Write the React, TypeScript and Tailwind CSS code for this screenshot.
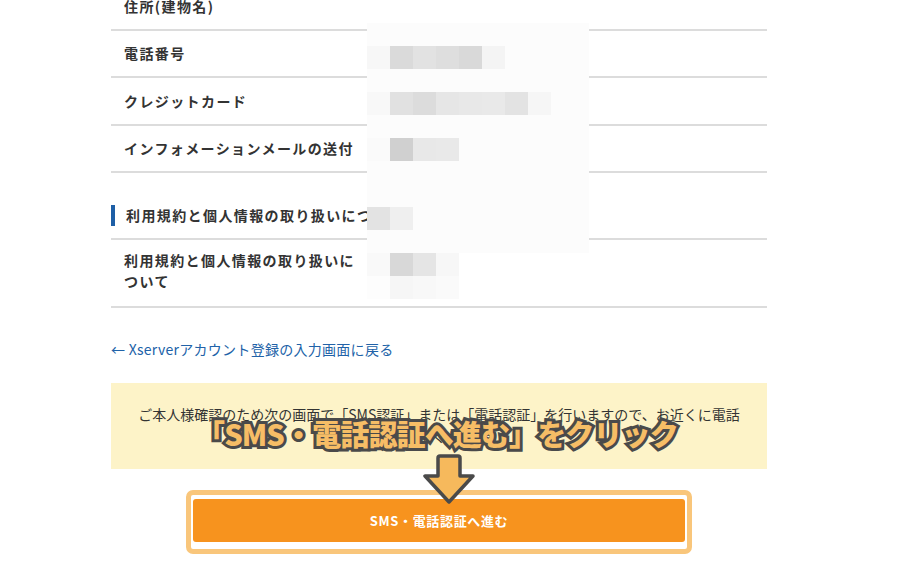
import { FC } from 'react';

const JP = 'font-["Noto_Sans_CJK_JP","Noto_Sans",sans-serif]';

const W = 'bg-[#fcfcfc]';
const T = 'bg-transparent';

// blurred values over the right column (mosaic)
const mosaic: string[][] = [
  [W, W, W, W, W, W, W, W, W, W],
  ['bg-[#f7f7f7]', 'bg-[#dadada]', 'bg-[#e2e2e2]', 'bg-[#dedede]', 'bg-[#d9d9d9]', 'bg-[#f4f4f4]', W, W, W, W],
  [W, W, W, W, W, W, W, W, W, W],
  ['bg-[#f8f8f8]', 'bg-[#e1e1e1]', 'bg-[#dcdcdc]', 'bg-[#e6e6e6]', 'bg-[#e8e8e8]', 'bg-[#e9e9e9]', 'bg-[#e3e3e3]', 'bg-[#f6f6f6]', W, W],
  [W, W, W, W, W, W, W, W, W, W],
  ['bg-[#fafafa]', 'bg-[#d0d0d0]', 'bg-[#e8e8e8]', 'bg-[#e9e9e9]', W, W, W, W, W, W],
  [W, W, W, W, W, W, W, W, W, W],
  [W, W, W, W, W, W, W, W, W, W],
  ['bg-[#e3e3e3]', 'bg-[#efefef]', W, W, W, W, W, W, W, W],
  [W, W, W, W, W, W, W, W, W, W],
  ['bg-[#f9f9f9]', 'bg-[#d8d8d8]', 'bg-[#e5e5e5]', 'bg-[#f7f7f7]', T, T, T, T, T, T],
  ['bg-[#fdfdfd]', 'bg-[#f6f6f6]', 'bg-[#f8f8f8]', 'bg-[#fafafa]', T, T, T, T, T, T],
];

const Row: FC<{ label: string; h: string }> = ({ label, h }) => (
  <div className={`flex items-center border-b-2 border-[#dcdcdc] ${h}`}>
    <div className="w-[256px] pl-[13px] text-[14px] font-bold tracking-[0.1em] text-[#333]">{label}</div>
    <div className="flex-1" />
  </div>
);

export default function App() {
  return (
    <div className={`relative flex min-h-[587px] flex-col bg-white ${JP}`}>
      <div className="ml-[111px] flex w-[656px] flex-col">
        {/* CONFIRMATION TABLE */}
        <div className="-mt-[16px] flex flex-col">
          <Row label="住所(建物名)" h="h-[47px]" />
          <Row label="電話番号" h="h-[47px]" />
          <Row label="クレジットカード" h="h-[48px]" />
          <Row label="インフォメーションメールの送付" h="h-[47px]" />
        </div>

        {/* TERMS */}
        <div className="mt-[32px] flex h-[21px] items-center border-l-4 border-[#1e5fa6] pl-[11px] text-[14px] font-bold tracking-[0.1em] text-[#333]">
          利用規約と個人情報の取り扱いについて
        </div>
        <div className="mt-[12px] flex border-y-2 border-[#dcdcdc] pt-[10px] pb-[14px]">
          <div className="w-[256px] pl-[13px] text-[14px] font-bold leading-[21px] tracking-[0.1em] text-[#333]">
            利用規約と個人情報の取り扱いについて
          </div>
        </div>

        <a href="#" className="mt-[31px] text-[14px] leading-[20px] tracking-[0.02em] text-[#2162a8]">
          ← Xserverアカウント登録の入力画面に戻る
        </a>

        {/* SMS NOTICE + BUTTON */}
        <div className="relative mt-[24px] flex flex-col">
          <div className="flex h-[86px] flex-col items-center bg-[#fdf3c8] px-[22px] pt-[20px] text-center text-[14px] leading-[22px] text-[#333]">
            <p>ご本人様確認のため次の画面で「SMS認証」または「電話認証」を行いますので、お近くに電話をご用意ください。</p>
          </div>

          <div className="mx-auto mt-[21px] w-[506px] rounded-[7px] border-[5px] border-[#f9c67b] px-[2px] pt-[4px] pb-[7px]">
            <button className="flex h-[43px] w-full items-center justify-center rounded-[3px] bg-[#f7931e] text-[13px] font-bold tracking-[0.05em] text-white">
              SMS・電話認証へ進む
            </button>
          </div>

          {/* annotation overlay */}
          <div className="pointer-events-none absolute top-[33px] left-[85px] text-[29px] leading-[34px] font-black tracking-[-0.03em] whitespace-nowrap text-[#f6bd66] [paint-order:stroke_fill] [-webkit-text-stroke:6px_#4a4a4a]">
            「SMS・電話認証へ進む」をクリック
          </div>
          <svg className="absolute top-[70px] left-[312px]" width="54" height="52" viewBox="0 0 54 52">
            <path
              d="M15 5 Q15 3 17 3 L35 3 Q37 3 37 5 L37 23 L50 23 L26 49 L2 23 L15 23 Z"
              fill="#f6b95c"
              stroke="#4a4a4a"
              strokeWidth="3.5"
              strokeLinejoin="round"
            />
          </svg>
        </div>
      </div>

      {/* pixelated mosaic hiding values */}
      <div className="absolute top-[23px] left-[367px] flex h-[276px] w-[222px] flex-col overflow-hidden">
        {mosaic.map((r, i) => (
          <div key={i} className="flex h-[23px] shrink-0">
            {r.map((c, j) => (
              <div key={j} className={`h-[23px] w-[23px] shrink-0 ${c}`} />
            ))}
          </div>
        ))}
      </div>
    </div>
  );
}
